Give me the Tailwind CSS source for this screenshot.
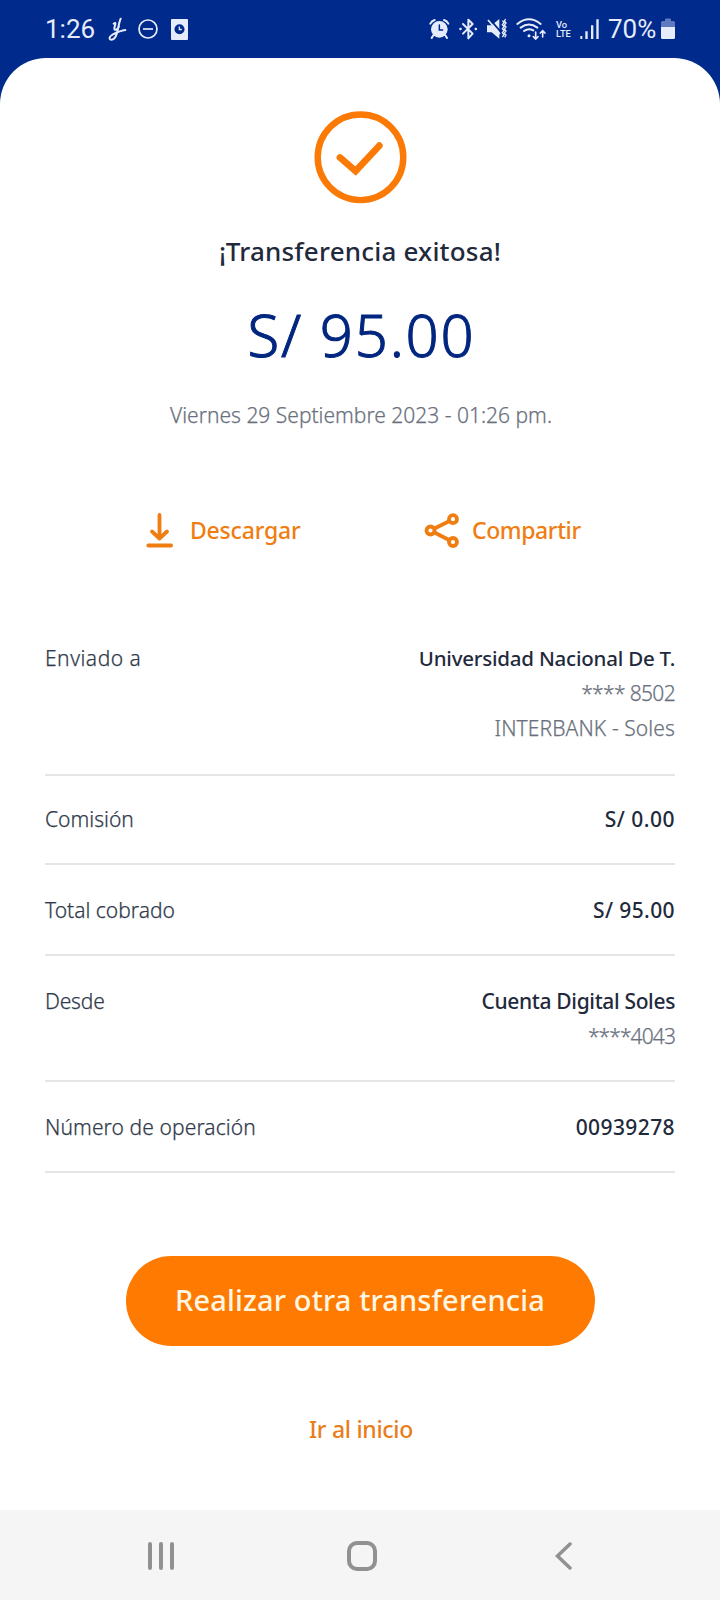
<!DOCTYPE html>
<html lang="es">
  <head>
    <meta charset="UTF-8" />
    <meta name="viewport" content="width=device-width, initial-scale=1.0" />
    <title>Transferencia exitosa</title>
    <script src="https://cdn.jsdelivr.net/npm/@tailwindcss/browser@4"></script>
  </head>
  <body class="bg-[#002a8c] font-['Noto_Sans',sans-serif]">
    <div class="flex h-[1600px] w-[720px] flex-col overflow-hidden">
      <!-- Status bar -->
      <header
        class="flex h-[58px] shrink-0 items-center justify-between pr-[45px] pl-[45px] font-['Roboto',sans-serif] text-[#e6ecfb]"
      >
        <div class="flex items-center">
          <span class="w-[63px] text-[26px] leading-[58px]">1:26</span>
          <svg class="h-[24px] w-[19px]" viewBox="324 48 57 72" fill="none" stroke="currentColor" stroke-width="6" stroke-linecap="round" stroke-linejoin="round">
            <path d="M341 68l5-2c2 2-3 10-3 17 0 7 10 3 14-6M362 53c-5 12-6 22-9 34-3 16-9 29-18 29-9 0-8-9 1-14 11-6 25-14 40-15" />
          </svg>
          <svg class="ml-[11px] h-[20px] w-[20px]" viewBox="0 0 20 20" fill="none" stroke="currentColor" stroke-width="1.7">
            <circle cx="10" cy="10" r="9" />
            <path d="M5 10h10" />
          </svg>
          <svg class="ml-[13px] h-[21px] w-[17px]" viewBox="0 0 17 21">
            <rect width="17" height="21" rx="1" fill="currentColor" />
            <circle cx="8.5" cy="10.3" r="5" fill="#002a8c" />
            <path d="M8.300 7.500v3h2.500" fill="none" stroke="currentColor" stroke-width="1.300" />
          </svg>
        </div>
        <div class="flex items-center">
          <svg class="h-[22px] w-[21px]" viewBox="56 54 63 66" fill="none" stroke="currentColor" stroke-linecap="round">
            <circle cx="87" cy="88" r="25" fill="currentColor" stroke="none" />
            <path d="M69 106l-5 8M105 106l5 8M60 71q4-8 13-11M114 71q-4-8-13-11" stroke-width="6" />
            <path d="M87 75v15h10" stroke="#002a8c" stroke-width="4.500" />
          </svg>
          <svg class="ml-[8px] h-[22px] w-[20px]" viewBox="144 54 60 66" fill="none" stroke="currentColor" stroke-width="6" stroke-linejoin="round" stroke-linecap="round">
            <path d="M159 72l29 29-13 14V59l13 13-29 29" />
            <path d="M151 87h1M197 87h1" stroke-width="7" />
          </svg>
          <svg class="ml-[8px] h-[22px] w-[22px]" viewBox="229 54 66 66" fill="none" stroke="currentColor">
            <path d="M232 76h14l23-19v59l-23-19h-14z" fill="currentColor" stroke="none" />
            <path d="M239 56l36 42" stroke="#002a8c" stroke-width="5" />
            <path d="M235 60l36 42" stroke-width="5" />
            <path d="M278 62l5 6-5 6 5 6-5 6 5 6-5 6 5 6-5 7M288 57l-4 6 5 6-5 6 5 6-5 6 5 6-5 6 5 6-4 7" stroke-width="4" />
          </svg>
          <svg class="ml-[8px] h-[24px] w-[31px]" viewBox="319 51 93 72" fill="none" stroke="currentColor" stroke-width="6" stroke-linecap="round">
            <path d="M323 72q35-28 70 0M333 83q25-19 50 0M343 93q13-10 28-2" />
            <circle cx="358" cy="107" r="4.500" fill="currentColor" stroke="none" />
            <path d="M378 96v20M371 110l7 7 7-7M399 111V93M392 99l7-7 7 7" stroke-width="5" />
          </svg>
          <div class="ml-[9px] w-[18px] text-[9.300px] leading-[9px] font-medium">
            <div>Vo</div>
            <div>LTE</div>
          </div>
          <svg class="ml-[6px] h-[22px] w-[19px]" viewBox="510 54 57 66" fill="currentColor">
            <path d="M511 108h6v9h-6zM526 94h7v23h-7zM543 76h7v41h-7zM559 58h7v59h-7z" />
          </svg>
          <span class="ml-[9px] w-[53px] text-[26px] leading-[58px]">70%</span>
          <svg class="h-[22px] w-[14px]" viewBox="0 0 14 22">
            <path d="M0 9V4.500q0-1.500 1.500-1.500h2.500V1.500q0-1 1-1h4q1 0 1 1V3h2.500q1.500 0 1.500 1.500V9z" fill="#5f79c0" />
            <path d="M0 9h14v10.500q0 1.500-1.500 1.500h-11q-1.500 0-1.500-1.500z" fill="currentColor" />
          </svg>
        </div>
      </header>

      <main class="flex grow flex-col rounded-t-[46px] bg-white">
        <section class="flex flex-col items-center pt-[52px]">
          <svg class="h-[94px] w-[94px]" viewBox="0 0 94 94" fill="none" stroke="#fb7a05">
            <circle cx="47.500" cy="47.300" r="42.800" stroke-width="6.400" />
            <path d="M27 47.500l15.600 13.500L66.300 35.700" stroke-width="6.800" stroke-linecap="round" />
          </svg>
          <h1 class="mt-[29px] text-[26px] leading-[36px] font-medium tracking-[0.200px] text-[#1f2a3c]">¡Transferencia exitosa!</h1>
          <p class="mt-[31px] pl-[3px] text-[58px] leading-[70px] font-light tracking-[1.800px] text-[#00267f] [-webkit-text-stroke:1px]">S/ 95.00</p>
          <p class="mt-[30px] pl-[2px] text-[21px] leading-[30px] font-light text-[#6a717d] [-webkit-text-stroke:0.25px]">Viernes 29 Septiembre 2023 - 01:26 pm.</p>
        </section>

        <section class="mt-[80px] flex h-10 items-center pl-[146px] text-[23px] font-medium text-[#ef7d12]">
          <a class="flex w-[278px] items-center gap-[16px]">
            <svg class="h-[36px] w-[28px]" viewBox="0 0 28 36" fill="none" stroke="currentColor" stroke-width="3.800" stroke-linecap="round" stroke-linejoin="round">
              <path d="M13.500 3v23M6 19.500l7.500 7L21 19.500M2.300 33.500h22.800" />
            </svg>
            <span class="tracking-[-0.200px]">Descargar</span>
          </a>
          <a class="flex items-center gap-[13px]">
            <svg class="h-[36px] w-[35px]" viewBox="0 0 35 36" fill="none" stroke="currentColor" stroke-width="3.800">
              <circle cx="6.500" cy="18.500" r="4" />
              <circle cx="29" cy="7.200" r="4" />
              <circle cx="29" cy="30" r="4" />
              <path d="M10 16.700L25.500 9M10 20.300l15.500 8" />
            </svg>
            <span class="tracking-[-0.400px]">Compartir</span>
          </a>
        </section>

        <dl class="mx-[45px] mt-[91px] text-[21px] leading-[35px] font-light text-[#303a4a] [-webkit-text-stroke:0.25px]">
          <div class="flex justify-between border-b-2 border-[#e5e5e5] pb-[28px]">
            <dt class="tracking-[0.500px]">Enviado a</dt>
            <dd class="text-right">
              <div class="text-[20.500px] font-medium tracking-[-0.220px] text-[#1f2a3c] [-webkit-text-stroke:0]">Universidad Nacional De T.</div>
              <div class="tracking-[-0.650px] text-[#6a717d]">**** 8502</div>
              <div class="tracking-[0.100px] text-[#6a717d]">INTERBANK - Soles</div>
            </dd>
          </div>
          <div class="flex justify-between border-b-2 border-[#e5e5e5] py-[26px]">
            <dt>Comisión</dt>
            <dd class="font-medium tracking-[0.500px] text-[#1f2a3c] [-webkit-text-stroke:0]">S/ 0.00</dd>
          </div>
          <div class="flex justify-between border-b-2 border-[#e5e5e5] pt-[28px] pb-[26px]">
            <dt>Total cobrado</dt>
            <dd class="font-medium tracking-[0.400px] text-[#1f2a3c] [-webkit-text-stroke:0]">S/ 95.00</dd>
          </div>
          <div class="flex justify-between border-b-2 border-[#e5e5e5] pt-[28px] pb-[26px]">
            <dt class="tracking-[-0.200px]">Desde</dt>
            <dd class="text-right">
              <div class="font-medium tracking-[-0.350px] text-[#1f2a3c] [-webkit-text-stroke:0]">Cuenta Digital Soles</div>
              <div class="tracking-[-0.900px] text-[#6a717d]">****4043</div>
            </dd>
          </div>
          <div class="flex justify-between border-b-2 border-[#e5e5e5] pt-[28px] pb-[26px]">
            <dt class="tracking-[0.100px]">Número de operación</dt>
            <dd class="font-medium tracking-[0.400px] text-[#1f2a3c] [-webkit-text-stroke:0]">00939278</dd>
          </div>
        </dl>

        <section class="mt-[83px] flex flex-col items-center">
          <button class="h-[90px] w-[469px] rounded-full bg-[#ff7a00] pb-[2px] text-[29px] font-medium tracking-[0.150px] text-[#fff6e3]">
            Realizar otra transferencia
          </button>
          <a class="mt-[65px] pl-[2px] text-[23px] leading-[36px] font-medium tracking-[-0.300px] text-[#e87d1c]">Ir al inicio</a>
        </section>
      </main>

      <!-- Navigation bar -->
      <nav class="flex h-[90px] shrink-0 items-center bg-[#f5f5f5] pl-[147px] text-[#919191]">
        <svg class="h-[30px] w-[28px]" viewBox="0 0 28 30" fill="none" stroke="currentColor" stroke-width="4" stroke-linecap="round">
          <path d="M3 4v24M14 4v24M25 4v24" />
        </svg>
        <svg class="ml-[170px] h-[32px] w-[32px]" viewBox="0 0 32 32" fill="none" stroke="currentColor" stroke-width="4">
          <rect x="4" y="4" width="26" height="26" rx="8" />
        </svg>
        <svg class="ml-[177px] h-[30px] w-[18px]" viewBox="0 0 18 30" fill="none" stroke="currentColor" stroke-width="3.500" stroke-linecap="round" stroke-linejoin="miter">
          <path d="M16 4L3.500 16l12.500 12" />
        </svg>
      </nav>
    </div>
  </body>
</html>
